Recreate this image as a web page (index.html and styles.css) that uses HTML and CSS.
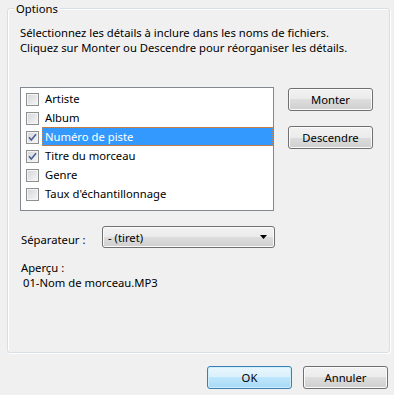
FILE: index.html
```html
<!DOCTYPE html>
<html>
<head>
    <title>Options</title>
    <link rel="stylesheet" href="styles.css">
</head>
<body>
    <div class="dialog">
        <div class="group">
            <span class="legend">Options</span>
            <p class="intro">Sélectionnez les détails à inclure dans les noms de fichiers.<br>Cliquez sur Monter ou Descendre pour réorganiser les détails.</p>

            <div class="main-row">
                <ul class="listbox">
                    <li class="item"><span class="cb"></span><span class="label">Artiste</span></li>
                    <li class="item"><span class="cb"></span><span class="label">Album</span></li>
                    <li class="item selected"><span class="cb checked"><svg width="11" height="11" viewBox="0 0 11 11"><path d="M2 5.2 L4.3 8 L9 2.2" fill="none" stroke="#4a5f97" stroke-width="1.6"/></svg></span><span class="label">Numéro de piste</span></li>
                    <li class="item"><span class="cb checked"><svg width="11" height="11" viewBox="0 0 11 11"><path d="M2 5.2 L4.3 8 L9 2.2" fill="none" stroke="#4a5f97" stroke-width="1.6"/></svg></span><span class="label">Titre du morceau</span></li>
                    <li class="item"><span class="cb"></span><span class="label">Genre</span></li>
                    <li class="item"><span class="cb"></span><span class="label">Taux d'échantillonnage</span></li>
                </ul>
                <div class="side-buttons">
                    <button class="btn">Monter</button>
                    <button class="btn">Descendre</button>
                </div>
            </div>

            <div class="sep-row">
                <span class="sep-label">Séparateur :</span>
                <div class="combo">
                    <span>- (tiret)</span>
                    <svg width="7" height="4" viewBox="0 0 7 4"><path d="M0 0 H7 L3.5 4 Z" fill="#000"/></svg>
                </div>
            </div>

            <div class="preview">
                <div>Aperçu :</div>
                <div class="preview-name">01-Nom de morceau.MP3</div>
            </div>
        </div>

        <div class="footer">
            <button class="btn default">OK</button>
            <button class="btn">Annuler</button>
        </div>
    </div>
</body>
</html>
```

FILE: styles.css
```css
body {
    margin: 0;
    background-color: #f0f0f0;
    font-family: "Noto Sans", sans-serif;
    font-size: 11.25px;
    line-height: 15px;
    color: #000;
}
.dialog {
    width: 394px;
    height: 395px;
    overflow: hidden;
}
.group {
    position: relative;
    box-sizing: border-box;
    height: 345px;
    margin: 8px 4px 0 7px;
    padding-left: 12px;
    border: 1px solid #d5dfe5;
    border-radius: 3px;
    box-shadow: 1px 1px 0 #fff, inset 1px 1px 0 #fff;
}
.legend {
    position: absolute;
    top: -8px;
    left: 6px;
    padding: 0 2px;
    background-color: #f0f0f0;
}
.intro {
    margin: 0;
    padding-top: 16px;
}
.main-row {
    display: flex;
    gap: 14px;
    margin-top: 32px;
}
.listbox {
    box-sizing: border-box;
    width: 254px;
    height: 124px;
    margin: 0;
    padding: 1px 0 0 5px;
    list-style: none;
    background-color: #fff;
    border: 1px solid #828790;
}
.item {
    display: flex;
    align-items: center;
    height: 19px;
}
.cb {
    box-sizing: border-box;
    width: 13px;
    height: 13px;
    margin-top: 1px;
    border: 1px solid #8e8f8f;
    background: linear-gradient(135deg, #d3d5d9, #f7f7f7);
    box-shadow: inset 0 0 0 1px #f4f4f4;
}
.cb svg {
    display: block;
}
.label {
    display: flex;
    align-items: center;
    box-sizing: border-box;
    height: 19px;
    margin-left: 3px;
    padding-left: 3px;
}
.selected .label {
    flex: 1;
    color: #fff;
    background-color: #3399ff;
    border: 1px dotted #c9834a;
    padding-left: 2px;
}
.side-buttons {
    display: flex;
    flex-direction: column;
    gap: 15px;
    padding-top: 1px;
}
.btn {
    box-sizing: border-box;
    width: 85px;
    height: 23px;
    padding: 0;
    font-family: inherit;
    font-size: 11.25px;
    color: #000;
    border: 1px solid #707070;
    border-radius: 3px;
    background: linear-gradient(#f2f2f2 0%, #ebebeb 50%, #dddddd 50%, #cfcfcf 100%);
    box-shadow: inset 0 0 0 1px #fbfbfb;
}
.btn.default {
    border-color: #3c7fb1;
    background: linear-gradient(#eaf6fd 0%, #d9f0fc 50%, #bee6fd 50%, #a7d9f5 100%);
    box-shadow: inset 0 0 0 1px #cdeefd;
}
.sep-row {
    display: flex;
    align-items: center;
    margin-top: 15px;
}
.sep-label {
    width: 81px;
    padding-left: 1px;
    padding-top: 4px;
}
.combo {
    box-sizing: border-box;
    display: flex;
    align-items: center;
    justify-content: space-between;
    width: 173px;
    height: 22px;
    padding: 0 7px 0 5px;
    border: 1px solid #707070;
    border-radius: 3px;
    background: linear-gradient(#f2f2f2 0%, #ebebeb 50%, #dddddd 50%, #cfcfcf 100%);
    box-shadow: inset 0 0 0 1px #fbfbfb;
}
.preview {
    margin-top: 12px;
    padding-left: 1px;
}
.preview-name {
    padding-left: 2px;
}
.footer {
    display: flex;
    justify-content: flex-end;
    gap: 11px;
    margin-top: 13px;
    padding-right: 6px;
}
```
